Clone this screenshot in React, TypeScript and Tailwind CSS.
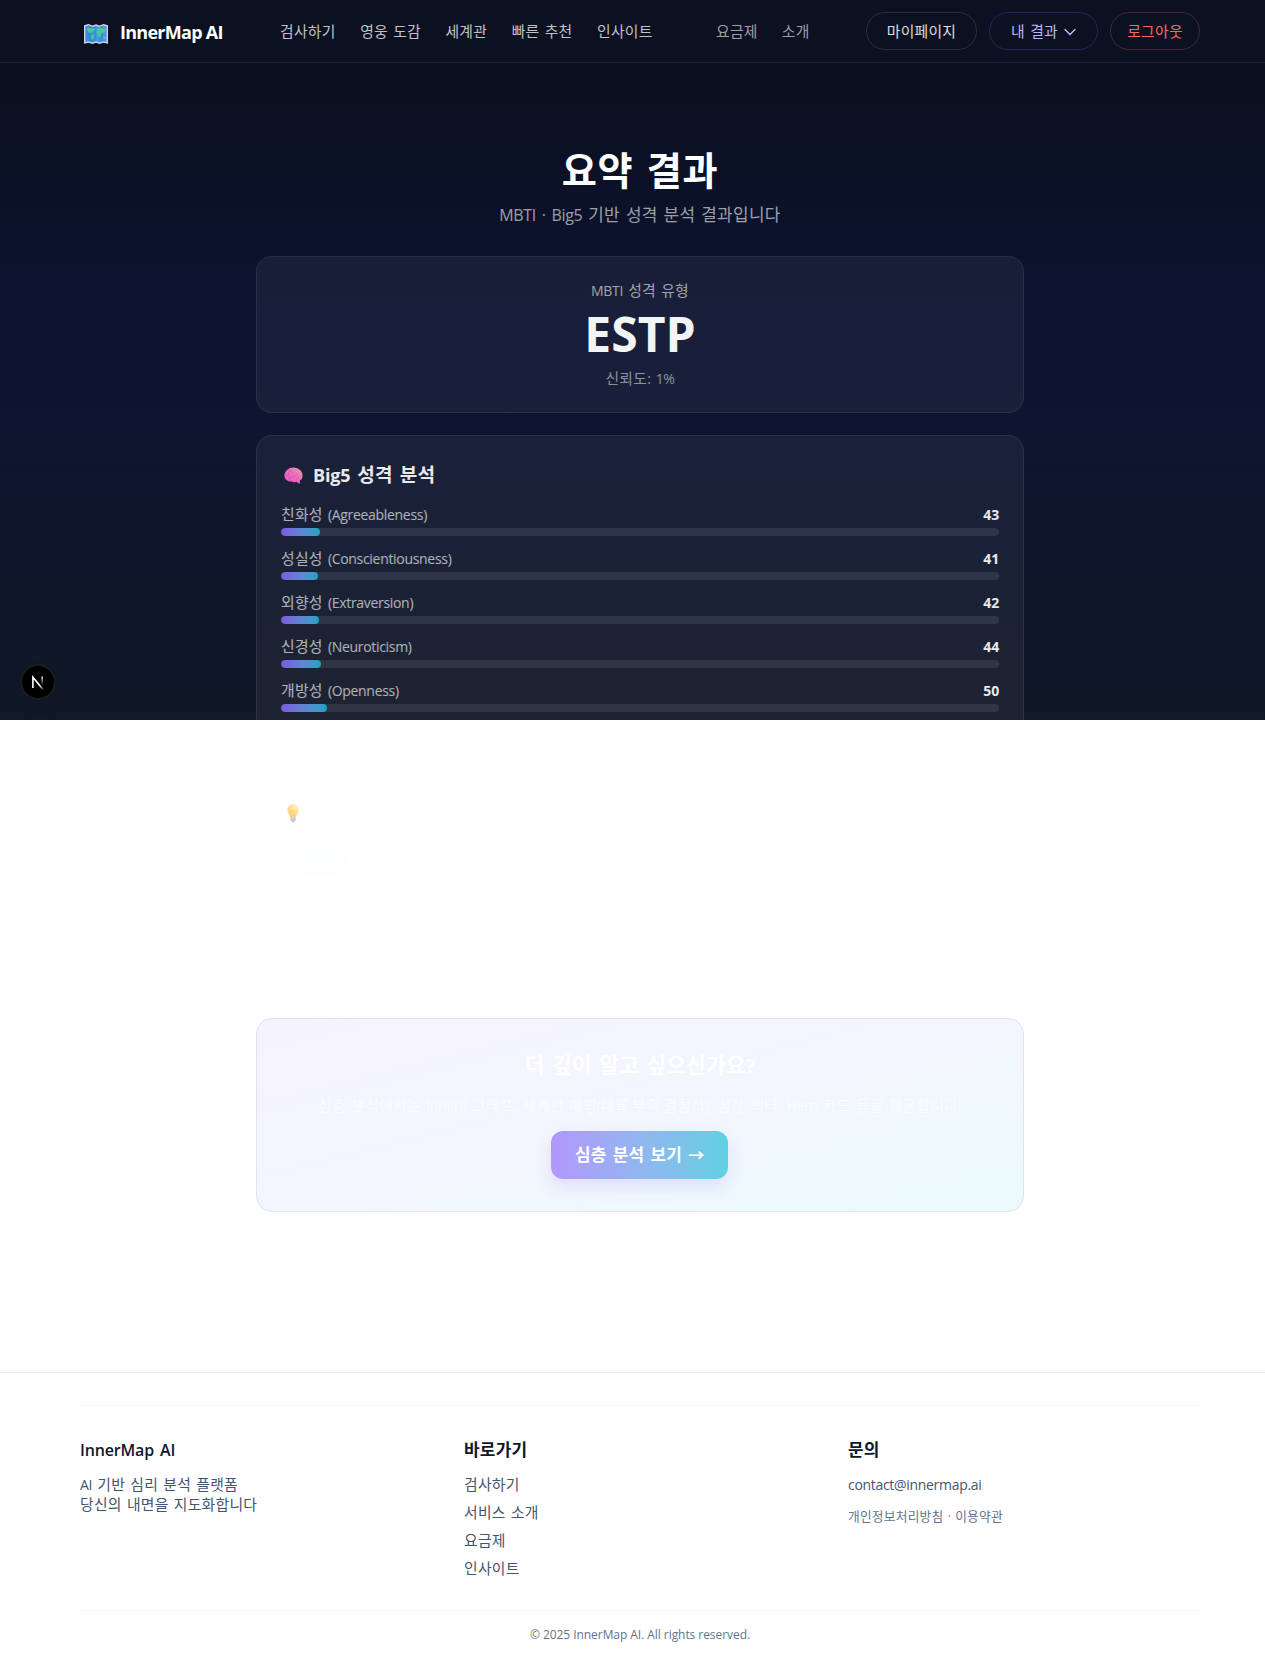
import React from "react";

const HANGUL = /([\u3131-\u318e\uac00-\ud7a3]+)/;

/* Sets Hangul runs slightly larger than the Latin text they sit beside. */
function T({ children, bold = false }: { children: string; bold?: boolean }) {
  return (
    <>
      {children.split(HANGUL).map((part, i) =>
        HANGUL.test(part) ? (
          <span key={i} className={bold ? "text-[1.06em] leading-none tracking-[0.015em]" : "text-[1.06em] leading-none tracking-[0.018em]"}>
            {part}
          </span>
        ) : (
          <span key={i} className={bold ? "tracking-[-0.01em] [word-spacing:0.13em]" : "tracking-[-0.022em] [word-spacing:0.13em]"}>
            {part}
          </span>
        )
      )}
    </>
  );
}

function MapIcon() {
  return (
    <svg width="26" height="22" viewBox="0 0 26 22" className="block">
      <path d="M1 2.2 5.5 1 9.5 2.4 13 1.2 16.5 2.4 20.5 1 25 2.2V20.8L20.5 19.8 16.5 21 13 19.8 9.5 21 5.5 19.8 1 20.8Z" fill="#d9cdea" />
      <path d="M2.4 3.6 5.8 2.6 9.5 4 13 2.8V18.2L9.5 19.4 5.8 18.2 2.4 19Z" fill="#3b8de0" />
      <path d="M13 2.8 16.5 4 20.2 2.6 23.6 3.6V19L20.2 18.2 16.5 19.4 13 18.2Z" fill="#3f9be8" />
      <path d="M5.8 2.6 9.5 4V19.4L5.8 18.2ZM16.5 4 20.2 2.6V18.2L16.5 19.4Z" fill="#2f7fd6" opacity=".45" />
      <path d="M3.600 5.600 6 4.800 8.500 5.600 11.200 5.200 11.800 7.200 9.800 8.600 8.800 10.200 7.200 9.800 5.600 9.400 4.400 7.600ZM8.200 11 10.800 11.800 11.200 13.800 9.800 16.800 8.600 16 8 13.200Z" fill="#4cc98c" />
      <path d="M14 6.600 16.400 5.200 19.400 5 22.600 5.600 22.200 8.400 20.600 10 19 9.600 18 11 17.200 14.600 15.600 14.200 14 10.600 13.600 8.400ZM20 13.600H22.600V16H20.400Z" fill="#4cc98c" />
    </svg>
  );
}

function BrainIcon() {
  return (
    <svg width="19" height="17" viewBox="0 0 19 17" className="block">
      <defs>
        <linearGradient id="brain" x1="0" y1="1" x2="1" y2="0">
          <stop offset="0" stopColor="#ea4fd0" />
          <stop offset=".5" stopColor="#e96cc0" />
          <stop offset="1" stopColor="#ee9a9e" />
        </linearGradient>
      </defs>
      <path d="M.4 9.600C0 5 3.800.5 9.200.4c5.400-.1 9.300 3.600 9.400 8.200 0 2.400-1 4.200-2.800 5l.2 2.800c-1.400.4-2.600-.4-3-1.600-2 .6-4 .4-5.400-.2-3.800.2-6.600-1.600-7.200-5Z" fill="url(#brain)" />
      <path d="M3 8.600c1-.2 1.600-1 1.800-2.200M6 4.200c1.200-.2 2 .4 2.200 1.200M9 9.600c1.800.2 3-.6 3.400-2M4.400 11.200c1.600.4 3-.2 3.800-1.200M12.600 12c1.200-.2 2-1 2.200-2" fill="none" stroke="#c8469f" strokeWidth=".6" strokeLinecap="round" />
    </svg>
  );
}

function BulbIcon() {
  return (
    <svg width="12" height="19" viewBox="0 0 12 19" className="block">
      <defs>
        <radialGradient id="bulb" cx=".68" cy=".22" r=".8">
          <stop offset="0" stopColor="#fff0bd" />
          <stop offset=".5" stopColor="#ffdf90" />
          <stop offset="1" stopColor="#fcd083" />
        </radialGradient>
      </defs>
      <path d="M6 .3A5.700 5.700 0 0 0 .3 6c0 2.600 2.300 4 2.900 7.600h5.600C9.400 10 11.700 8.600 11.700 6A5.700 5.700 0 0 0 6 .3Z" fill="url(#bulb)" />
      <path d="M4.600 13 3.900 7.400Q5 5.600 6 7.400 7 5.600 8.100 7.400L7.400 13" fill="none" stroke="#f6b96c" strokeWidth=".6" />
      <path d="M3.300 13.600h5.400v3.200l-1.500.8-.6.800H5.400l-.6-.8-1.500-.8Z" fill="#cdc5d9" />
    </svg>
  );
}

const traits: [string, number][] = [
  ["친화성 (Agreeableness)", 43],
  ["성실성 (Conscientiousness)", 41],
  ["외향성 (Extraversion)", 42],
  ["신경성 (Neuroticism)", 44],
  ["개방성 (Openness)", 50],
];

const shortcuts = ["검사하기", "서비스 소개", "요금제", "인사이트"];

function Header() {
  return (
    <header className="h-[63px] border-b border-white/[0.06] bg-[#0b1120] px-20">
      <div className="flex h-full items-center whitespace-nowrap text-sm leading-5 text-white/75">
        <div className="ml-[3px] mt-1.5">
          <MapIcon />
        </div>
        <div className="ml-[11px] w-[160px] pt-px text-lg font-bold leading-7 text-white tracking-[-0.04em]">InnerMap AI</div>
        <nav className="flex w-[436px] gap-[24.5px] pt-px">
          <a><T>검사하기</T></a>
          <a><T>영웅 도감</T></a>
          <a><T>세계관</T></a>
          <a><T>빠른 추천</T></a>
          <a><T>인사이트</T></a>
        </nav>
        <nav className="flex gap-6 pt-px text-white/60">
          <a><T>요금제</T></a>
          <a><T>소개</T></a>
        </nav>
        <div className="ml-auto flex gap-3">
          <button className="flex h-[38px] w-[111px] items-center justify-center rounded-full border border-white/[0.12] pt-px text-white/85"><T>마이페이지</T></button>
          <button className="flex h-[38px] w-[109px] items-center justify-center gap-1.5 rounded-full border border-violet-500/25 pt-px text-violet-300">
            <span><T>내 결과</T></span>
            <svg width="12" height="8" viewBox="0 0 12 8" fill="none" stroke="currentColor" strokeWidth="1.4" strokeLinecap="round" strokeLinejoin="round">
              <path d="m1 1.500 5 5 5-5" />
            </svg>
          </button>
          <button className="flex h-[38px] w-[90px] items-center justify-center rounded-full border border-red-400/25 pt-px text-red-400"><T>로그아웃</T></button>
        </div>
      </div>
    </header>
  );
}

function Results() {
  return (
    <section className="h-[657px] overflow-hidden bg-[linear-gradient(180deg,#0a0f1e_0%,#0d1330_38%,#0d1530_55%,#111827_100%)] pt-[84px]">
      <div className="mx-auto w-[768px]">
        <div className="text-center">
          <h1 className="h-[50px] text-[36px] font-bold leading-[50px] text-white"><T bold>요약 결과</T></h1>
          <p className="mt-[6px] h-6 leading-6 text-white/60"><T>MBTI · Big5 기반 성격 분석 결과입니다</T></p>
        </div>
        <div className="mt-[29px] flex h-[157px] flex-col items-center rounded-2xl border border-white/[0.08] bg-white/[0.05] pt-6">
          <div className="h-5 text-sm leading-5 text-white/60"><T>MBTI 성격 유형</T></div>
          <div className="mt-[9px] text-5xl font-bold leading-[48px] text-[#f3f4f6]">ESTP</div>
          <div className="mt-[11px] h-5 text-sm leading-5 text-white/50"><T>신뢰도: 1%</T></div>
        </div>
        <div className="mt-[22px] h-[420px] rounded-2xl border border-white/[0.08] bg-white/[0.05] px-6 pt-[25px]">
          <h2 className="flex h-7 items-center text-lg font-bold leading-7 text-white/90">
            <span className="ml-[3px] mt-px w-[29px]"><BrainIcon /></span>
            <span><T bold>Big5 성격 분석</T></span>
          </h2>
          <div className="mt-[15px] flex flex-col gap-3">
            {traits.map(([name, value]) => (
              <div key={name}>
                <div className="flex h-6 justify-between text-sm leading-[22px]">
                  <span className="text-white/65"><T>{name}</T></span>
                  <span className="font-bold text-white/90 tracking-[-0.01em]">{value}</span>
                </div>
                <div className="h-2 overflow-hidden rounded-full bg-white/[0.09]">
                  <div className="h-full rounded-full bg-linear-to-r from-[#7b59e0] to-[#0ca6c4]" style={{ width: `${value * 0.127}%` }} />
                </div>
              </div>
            ))}
          </div>
        </div>
      </div>
    </section>
  );
}

function Insight() {
  return (
    <section className="mx-auto h-[298px] w-[768px] px-8 pt-[84px]">
      <div className="-ml-px"><BulbIcon /></div>
      <div className="ml-px mt-[22px] h-[31px] w-[60px] rounded-full bg-[#fdfefe]" />
    </section>
  );
}

function DeepDive() {
  return (
    <section className="mx-auto mb-40 flex h-[194px] w-[768px] flex-col items-center rounded-2xl border border-[#e4defb] bg-[linear-gradient(to_bottom_right,#f6f3ff_0%,#f3f6fe_50%,#ebfbfc_100%)] pt-[33px]">
      <h2 className="h-7 text-xl font-bold leading-7 text-white"><T bold>더 깊이 알고 싶으신가요?</T></h2>
      <p className="mt-4 h-5 whitespace-nowrap text-sm leading-5 text-white/70">
        <T>심층 분석에서는 Inner9 그래프, 세계관 매핑(대륙·부족·결정석), 성장 벡터, Hero 카드 등을 제공합니다.</T>
      </p>
      <button className="mr-px mt-[15px] flex h-12 w-[177px] items-center justify-center rounded-xl bg-linear-to-r from-[#b197fc] to-[#5ed0e2] font-semibold text-white shadow-[0_8px_18px_rgba(139,92,246,0.16)]">
        <span><T bold>심층 분석 보기 →</T></span>
      </button>
    </section>
  );
}

function Footer() {
  return (
    <footer className="border-t border-[#e9ecf1] px-20 py-8 text-sm leading-5 text-slate-600">
      <div className="grid grid-cols-3 gap-8 border-t border-slate-100 pt-8">
        <div>
          <h3 className="mb-[13px] h-6 text-base font-semibold text-slate-900"><T bold>InnerMap AI</T></h3>
          <p className="h-5"><T>AI 기반 심리 분석 플랫폼</T></p>
          <p className="h-5"><T>당신의 내면을 지도화합니다</T></p>
        </div>
        <div>
          <h3 className="mb-[13px] h-6 text-base font-semibold text-slate-900"><T bold>바로가기</T></h3>
          <ul className="flex flex-col gap-2">
            {shortcuts.map((s) => (
              <li key={s} className="h-5"><T>{s}</T></li>
            ))}
          </ul>
        </div>
        <div>
          <h3 className="mb-[13px] h-6 text-base font-semibold text-slate-900"><T bold>문의</T></h3>
          <p className="h-5"><T>contact@innermap.ai</T></p>
          <p className="mt-3 text-xs leading-5 text-slate-500"><T>개인정보처리방침 · 이용약관</T></p>
        </div>
      </div>
      <div className="mt-[31px] border-t border-slate-100 pt-4 text-center text-xs text-slate-500"><span className="tracking-[-0.005em]">© 2025 InnerMap AI. All rights reserved.</span></div>
    </footer>
  );
}

function DevBadge() {
  return (
    <div className="absolute left-5 top-[664px] flex size-9 items-center justify-center rounded-full border-2 border-[#1c1c1e] bg-black shadow-[0_6px_16px_rgba(0,0,0,0.05)]">
      <svg width="14" height="15" viewBox="0 0 14 15" fill="none">
        <defs>
          <linearGradient id="stem" x1="0" y1="0" x2="0" y2="1">
            <stop offset="0" stopColor="#fff" />
            <stop offset="1" stopColor="#fff" stopOpacity="0" />
          </linearGradient>
          <linearGradient id="slash" x1="0" y1="0" x2="1" y2="1">
            <stop offset=".65" stopColor="#fff" />
            <stop offset="1" stopColor="#fff" stopOpacity=".1" />
          </linearGradient>
        </defs>
        <path d="M1.900 13V2.200L12.300 14.800" stroke="url(#slash)" strokeWidth="1.600" />
        <rect x="10.400" y="1.500" width="1.500" height="8.500" fill="url(#stem)" />
      </svg>
    </div>
  );
}

export default function App() {
  return (
    <div className="relative h-[1674px] overflow-hidden bg-white font-['Open_Sans','Noto_Sans_CJK_KR',sans-serif]">
      <div className="w-[1280px]">
        <Header />
        <Results />
        <Insight />
        <DeepDive />
        <Footer />
      </div>
      <DevBadge />
    </div>
  );
}
